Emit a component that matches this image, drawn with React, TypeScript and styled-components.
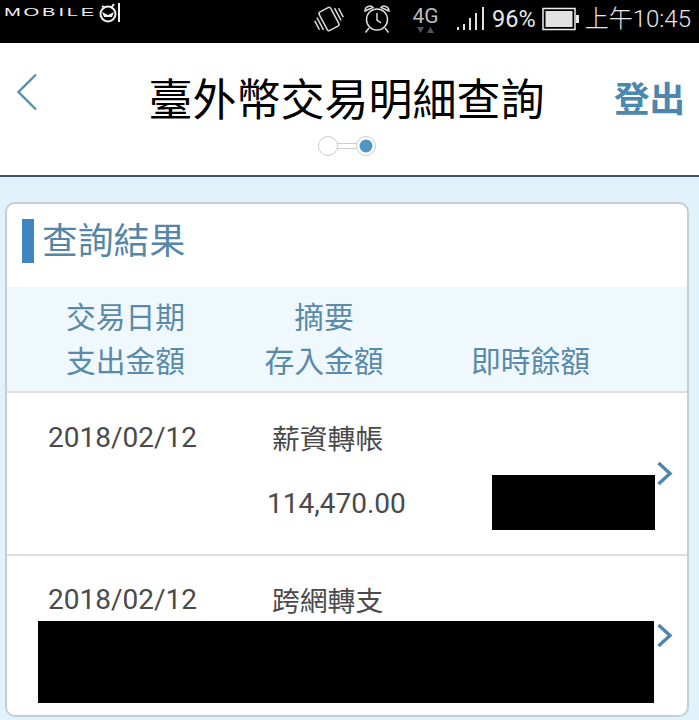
import styled, { createGlobalStyle } from "styled-components";

const GlobalStyle = createGlobalStyle`
    html, body {
        margin: 0;
        padding: 0;
        background: #e2f2fd;
    }
    body {
        font-family: "Noto Sans CJK TC", "Noto Sans", sans-serif;
    }
`;

const Page = styled.div`
    width: 699px;
    height: 720px;
    overflow: hidden;
    display: flex;
    flex-direction: column;
    background: #e2f2fd;
`;

const StatusBar = styled.div`
    height: 43px;
    flex: none;
    background: #000;
    color: #e8e8e8;
    display: flex;
    justify-content: space-between;
    padding: 0 8px 0 4px;
    box-sizing: border-box;
`;

const Logo = styled.div`
    display: flex;
    align-items: flex-start;
    padding-top: 2px;
`;

const LogoText = styled.span`
    font-family: "Liberation Sans", sans-serif;
    font-size: 11px;
    line-height: 20px;
    letter-spacing: 1.5px;
    width: 95px;
    display: inline-block;
    transform: scaleX(1.84);
    transform-origin: left center;
    color: #f2f2f2;
`;

const LogoMark = styled.svg`
    display: block;
    flex: none;
`;

const StatusRight = styled.div`
    display: flex;
    align-items: center;
    height: 38px;
`;

const StatusIcon = styled.svg<{ $gap: number }>`
    display: block;
    flex: none;
    margin-right: ${(p) => p.$gap}px;
`;

const NetworkBox = styled.div`
    width: 33px;
    margin-right: 15px;
    display: flex;
    flex-direction: column;
    align-items: center;
    color: #bdbdbd;
`;

const NetworkLabel = styled.span`
    font-family: "Roboto", sans-serif;
    font-size: 21px;
    line-height: 22px;
    margin-top: 2px;
`;

const NetworkArrows = styled.span`
    display: flex;
    gap: 3px;
    height: 8px;
`;

const Percent = styled.span`
    font-family: "Roboto", sans-serif;
    font-size: 23.5px;
    line-height: 38px;
    margin-right: 6px;
`;

const Clock = styled.span`
    font-family: "Roboto", "Noto Sans CJK TC", sans-serif;
    font-size: 24px;
    line-height: 38px;
    font-weight: 300;
`;

const Header = styled.div`
    height: 134px;
    flex: none;
    background: #fff;
    border-bottom: 2px solid #3f5364;
    box-sizing: border-box;
    display: grid;
    grid-template-columns: 147px 1fr 153px;
`;

const BackButton = styled.div`
    padding: 30px 0 0 16px;
`;

const HeaderCenter = styled.div`
    display: flex;
    flex-direction: column;
    align-items: center;
`;

const HeaderTitle = styled.div`
    font-size: 44px;
    line-height: 60px;
    margin-top: 24px;
    white-space: nowrap;
    color: #000;
`;

const Stepper = styled.svg`
    display: block;
    margin-top: 8px;
`;

const Logout = styled.div`
    font-size: 35.5px;
    font-weight: 700;
    line-height: 50px;
    color: #4c87b0;
    text-align: right;
    padding: 29px 14px 0 0;
`;

const Content = styled.div`
    flex: 1;
    padding: 25px 10px 0 5px;
`;

const Card = styled.div`
    height: 515px;
    box-sizing: border-box;
    background: #fff;
    border: 2px solid #c6cdd3;
    border-radius: 10px;
    overflow: hidden;
`;

const CardTitle = styled.div`
    height: 83px;
    box-sizing: border-box;
    padding: 15px 0 0 15px;
    display: flex;
    align-items: flex-start;
    gap: 9px;
`;

const TitleMark = styled.div`
    width: 12px;
    height: 44px;
    background: #3f85c0;
`;

const TitleText = styled.div`
    font-size: 35.8px;
    line-height: 44px;
    color: #5586a6;
    margin-top: -3px;
    margin-left: -1px;
`;

const TableHead = styled.div`
    height: 106px;
    box-sizing: border-box;
    background: #eff8fd;
    border-bottom: 2px solid #dcdfe1;
    padding-top: 6px;
    display: grid;
    grid-template-columns: 217px 200px 213px;
    grid-auto-rows: 44px;
    font-size: 29.8px;
    line-height: 44px;
    color: #5a8aa9;
    text-align: center;
`;

const HeadCell = styled.div<{ $col: number }>`
    grid-column: ${(p) => p.$col};
    padding-left: ${(p) => (p.$col === 1 ? 20 : 0)}px;
`;

const Row = styled.div`
    position: relative;
    height: 163px;
    box-sizing: border-box;
    border-bottom: 2px solid #dcdfe1;
    display: grid;
    grid-template-columns: 222px 1fr;
    grid-auto-rows: 66px;
    padding: 13px 0 0 41px;
    color: #4a4a4a;
    &:last-child {
        border-bottom: none;
        padding-top: 12px;
    }
`;

const DateText = styled.div`
    font-family: "Roboto", sans-serif;
    font-size: 28px;
    line-height: 64px;
`;

const Summary = styled.div`
    font-size: 27.8px;
    line-height: 64px;
    margin-top: -1px;
    margin-left: 2px;
`;

const Amount = styled.div`
    grid-column: 2;
    font-family: "Roboto", sans-serif;
    font-size: 28px;
    line-height: 64px;
    margin-left: -3px;
`;

/* the black blocks lie over the row, they hide account figures */
const Redaction = styled.div<{ $left: number; $top: number; $w: number; $h: number }>`
    position: absolute;
    left: ${(p) => p.$left}px;
    top: ${(p) => p.$top}px;
    width: ${(p) => p.$w}px;
    height: ${(p) => p.$h}px;
    background: #000;
`;

const Chevron = styled.svg<{ $top: number }>`
    position: absolute;
    right: 14px;
    top: ${(p) => p.$top}px;
`;

function RowChevron({ top }: { top: number }) {
    return (
        <Chevron $top={top} width="17" height="25" viewBox="0 0 17 25">
            <path d="M2.5 2 L14 12.5 L2.5 23" fill="none" stroke="#4f86ad" strokeWidth="3.4" />
        </Chevron>
    );
}

export default function App() {
    return (
        <Page>
            <GlobalStyle />
            <StatusBar>
                <Logo>
                    <LogoText>MOBILE</LogoText>
                    <LogoMark width="24" height="22" viewBox="0 0 24 22">
                        <circle cx="9" cy="12" r="7.5" fill="none" stroke="#eee" strokeWidth="2" />
                        <path d="M3 10 L9 13 L15 10 L13 15 L5 15 Z" fill="#eee" />
                        <path d="M3 4 L6 6 M15 2 L12 6" stroke="#eee" strokeWidth="2" />
                        <path d="M20 1 V20" stroke="#eee" strokeWidth="2" />
                    </LogoMark>
                </Logo>
                <StatusRight>
                    <StatusIcon $gap={18} width="32" height="32" viewBox="0 0 32 32" fill="none" stroke="#dcdcdc" strokeWidth="1.5">
                        <g transform="rotate(-28 16 16)">
                            <rect x="9.5" y="5.5" width="13" height="21" rx="2" />
                            <path d="M6 9 V23 M2.5 11 V21 M26 9 V23 M29.5 11 V21" />
                        </g>
                    </StatusIcon>
                    <StatusIcon $gap={18} width="28" height="30" viewBox="0 0 28 30" fill="none" stroke="#dcdcdc" strokeWidth="1.5">
                        <circle cx="14" cy="15.5" r="10.5" />
                        <path d="M14 9 V16 L18 19" />
                        <path d="M2 7 C2 2 8 1 10 3.5 Z M26 7 C26 2 20 1 18 3.5 Z" />
                        <path d="M6 24 L2.5 28.5 M22 24 L25.5 28.5" />
                    </StatusIcon>
                    <NetworkBox>
                        <NetworkLabel>4G</NetworkLabel>
                        <NetworkArrows>
                            <svg width="7" height="6" viewBox="0 0 7 6"><path d="M0 0 H7 L3.5 6 Z" fill="#555" /></svg>
                            <svg width="7" height="6" viewBox="0 0 7 6"><path d="M0 6 H7 L3.5 0 Z" fill="#555" /></svg>
                        </NetworkArrows>
                    </NetworkBox>
                    <StatusIcon $gap={7} width="28" height="24" viewBox="0 0 28 24" fill="#e0e0e0">
                        <rect x="0" y="20" width="2" height="3" />
                        <rect x="6" y="17" width="2" height="6" />
                        <rect x="12" y="11" width="2" height="12" />
                        <rect x="18" y="6" width="2" height="17" />
                        <rect x="25" y="0" width="2" height="23" />
                    </StatusIcon>
                    <Percent>96%</Percent>
                    <StatusIcon $gap={6} width="37" height="24" viewBox="0 0 37 24">
                        <rect x="1" y="1.5" width="32" height="21" fill="none" stroke="#eeeeee" strokeWidth="1.5" />
                        <rect x="3.5" y="4" width="27" height="16" fill="#e2e2e2" />
                        <rect x="34" y="8" width="3" height="8" fill="#e6e6e6" />
                    </StatusIcon>
                    <Clock>上午10:45</Clock>
                </StatusRight>
            </StatusBar>
            <Header>
                <BackButton>
                    <svg width="22" height="38" viewBox="0 0 22 38">
                        <path d="M20 1.5 L2.5 19 L20 36.5" fill="none" stroke="#5b8cab" strokeWidth="2.4" />
                    </svg>
                </BackButton>
                <HeaderCenter>
                    <HeaderTitle>臺外幣交易明細查詢</HeaderTitle>
                    <Stepper width="60" height="22" viewBox="0 0 60 22" fill="none">
                        <circle cx="11" cy="11" r="9.5" stroke="#c9cdd0" fill="#fff" />
                        <path d="M20 8.5 H40 M20 13.5 H40" stroke="#c9cdd0" />
                        <circle cx="49" cy="11" r="9.5" stroke="#c9cdd0" fill="#fff" />
                        <circle cx="49" cy="11" r="6.5" fill="#4f97c2" />
                    </Stepper>
                </HeaderCenter>
                <Logout>登出</Logout>
            </Header>
            <Content>
                <Card>
                    <CardTitle>
                        <TitleMark />
                        <TitleText>查詢結果</TitleText>
                    </CardTitle>
                    <TableHead>
                        <HeadCell $col={1}>交易日期</HeadCell>
                        <HeadCell $col={2}>摘要</HeadCell>
                        <HeadCell $col={3} />
                        <HeadCell $col={1}>支出金額</HeadCell>
                        <HeadCell $col={2}>存入金額</HeadCell>
                        <HeadCell $col={3}>即時餘額</HeadCell>
                    </TableHead>
                    <Row>
                        <DateText>2018/02/12</DateText>
                        <Summary>薪資轉帳</Summary>
                        <Amount>114,470.00</Amount>
                        <Redaction $left={485} $top={82} $w={163} $h={55} />
                        <RowChevron top={68} />
                    </Row>
                    <Row>
                        <DateText>2018/02/12</DateText>
                        <Summary>跨網轉支</Summary>
                        <Redaction $left={31} $top={65} $w={616} $h={82} />
                        <RowChevron top={67} />
                    </Row>
                </Card>
            </Content>
        </Page>
    );
}
